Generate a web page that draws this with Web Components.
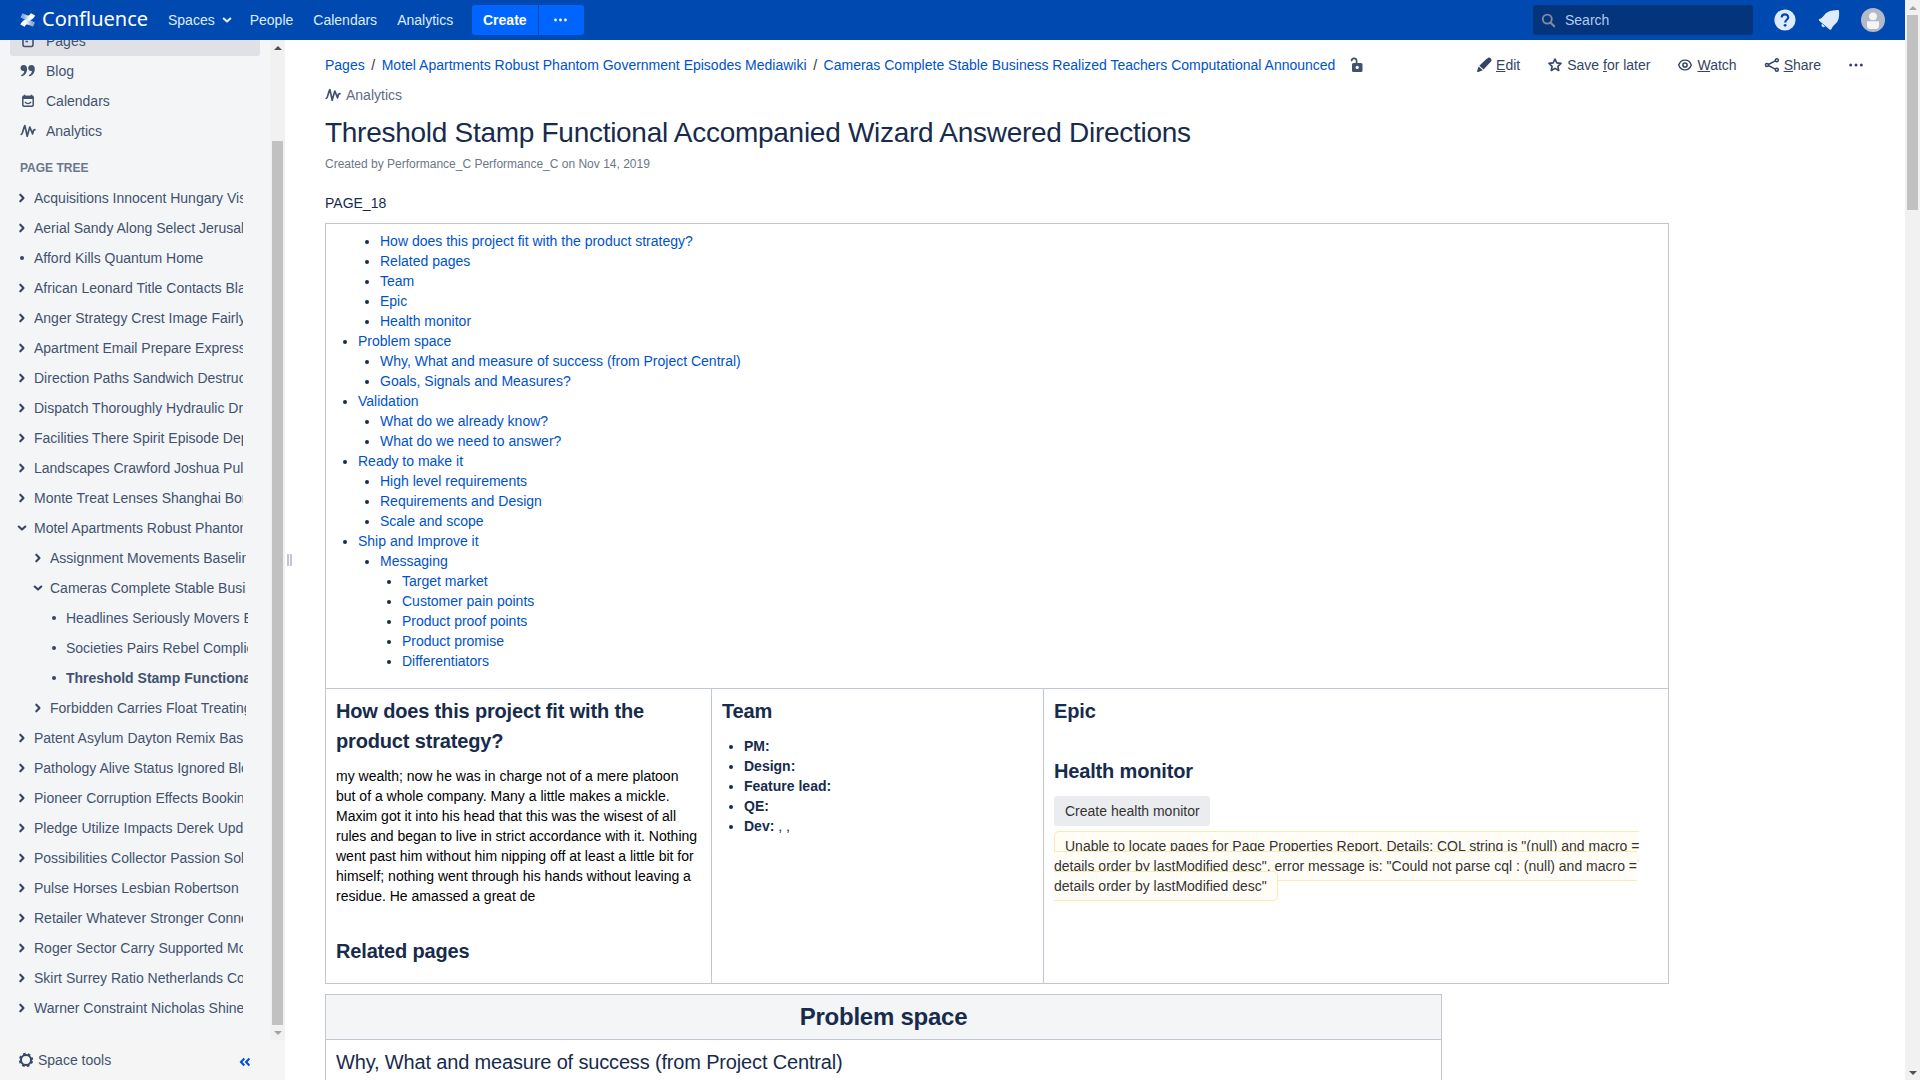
<!DOCTYPE html>
<html lang="en">
<head>
<meta charset="utf-8">
<title>Threshold Stamp Functional Accompanied Wizard Answered Directions - Confluence</title>
<style>
html,body{margin:0;height:100%;overflow:hidden;background:#fff}
body{font:14px/20px "Liberation Sans",Arial,sans-serif;color:#172b4d}
</style>
</head>
<body>
<wiki-app></wiki-app>
<script>
const define = (name, css, html) => customElements.define(name, class extends HTMLElement {
  constructor() {
    super();
    const root = this.attachShadow({ mode: 'open' });
    const t = document.createElement('template');
    t.innerHTML = `<style>*{box-sizing:border-box}a{color:#0052cc;text-decoration:none}${css}</style>${typeof html === 'function' ? html(this) : html}`;
    root.append(t.content.cloneNode(true));
  }
});
/* Elements whose markup depends on attributes render once connected. */
const defineAttr = (name, css, render) => customElements.define(name, class extends HTMLElement {
  connectedCallback() {
    if (this.shadowRoot) return;
    this.attachShadow({ mode: 'open' }).innerHTML = `<style>*{box-sizing:border-box}a{color:#0052cc;text-decoration:none}${css}</style>${render(this)}`;
  }
});

const S = 'fill="none" stroke="currentColor"';
const ICONS = {
  logo: `<defs><linearGradient id="a" x1="1" y1="0" x2=".2" y2="0"><stop offset="0" stop-color="#fff"/><stop offset=".45" stop-color="#fff"/><stop offset="1" stop-color="#fff" stop-opacity=".55"/></linearGradient><linearGradient id="b" x1="0" y1="0" x2=".8" y2="0"><stop offset="0" stop-color="#fff"/><stop offset=".45" stop-color="#fff"/><stop offset="1" stop-color="#fff" stop-opacity=".55"/></linearGradient></defs><path fill="url(#b)" d="M.6 11.9c-.2.3-.1.6.2.8l3.200 1.900c.3.2.6.1.8-.2 1.300-2.100 2.100-2.400 4.200-1.400l3.500 1.600c.3.1.6 0 .7-.3l1.600-3.400c.1-.3 0-.6-.3-.7L11 8.600C6.300 6.400 3.300 7.500.6 11.900z"/><path fill="url(#a)" d="M14.900 4.100c.2-.3.1-.6-.2-.8L11.500 1.400c-.3-.2-.6-.1-.8.2-1.300 2.100-2.100 2.400-4.200 1.400L3 1.400c-.3-.1-.6 0-.7.300L.7 5.100c-.1.300 0 .6.300.7l3.500 1.600c4.700 2.200 7.700 1.100 10.400-3.300z"/>`,
  pages: `<rect x="3" y="2.500" width="10" height="11" rx="1.500" ${S} stroke-width="1.600"/><path d="M5.500 6h5M5.500 8.500h2.500" ${S} stroke-width="1.300"/>`,
  blog: `<path d="M3.800 2C1.900 2 .5 3.300.5 5.100s1.300 3 2.900 3c.3 0 .6 0 .8-.1-.1 1.900-1.100 3.100-2.800 4.100-.6.400-.2 1.500.7 1.200 3.300-1.100 5-3.900 5-7.400C7.100 3.400 5.800 2 3.800 2zM11.500 2C9.600 2 8.200 3.300 8.200 5.100s1.300 3 2.900 3c.3 0 .6 0 .8-.1-.1 1.900-1.100 3.100-2.800 4.100-.6.400-.2 1.500.7 1.200 3.300-1.100 5-3.900 5-7.400C14.800 3.400 13.500 2 11.500 2z" fill="currentColor"/>`,
  calendar: `<rect x="2.800" y="3.500" width="10.400" height="9.700" rx="1.200" ${S} stroke-width="1.500"/><path d="M2.500 2.800h11v3.200h-11z" fill="currentColor"/><path d="M4.500 1.800v2M11.500 1.800v2" ${S} stroke-width="1.600"/><path d="M5 8.800c1.500 2.300 4.500 2.300 6 0" ${S} stroke-width="1.300"/>`,
  analytics: `<path d="M1.200 11.300C2.900 11.500 3.300 4.500 4.900 2.600L7.200 13.200 9.800 4 12.600 10.900 13.500 7.200 14.900 6.600" ${S} stroke-width="1.700" stroke-linejoin="round" stroke-linecap="round"/>`,
  search: `<circle cx="6.700" cy="6.500" r="4.800" ${S} stroke-width="2"/><path d="m10.300 10.300 3.800 3.900" ${S} stroke-width="2.300" stroke-linecap="round"/>`,
  lock: `<rect x="4" y="6" width="10.500" height="9" rx="1.500" fill="currentColor"/><circle cx="9.200" cy="10.400" r="1.600" fill="#fff"/><path d="M3.500 4.200C3.700.8 8.300.4 8.600 3.800V6.500" ${S} stroke-width="1.700"/>`,
  edit: `<path d="M10.100 2.200 12 .9c.7-.5 1.700-.4 2.300.2l.8.900c.6.700.6 1.500.1 2.200l-7.600 8.400-4.300-3.900zM2.600 9.400l4.200 3.900-4.500 1.700c-.8.200-1.400-.400-1.100-1.200z" fill="currentColor"/>`,
  star: `<path d="m8 2 1.800 3.900 4.200.5-3.100 2.900.8 4.200L8 11.400l-3.700 2.100.8-4.200L2 6.400l4.200-.5z" ${S} stroke-width="1.600" stroke-linejoin="round"/>`,
  watch: `<path d="M1.700 8c2.300-6.500 10.300-6.500 12.600 0-2.300 6.500-10.300 6.500-12.600 0z" ${S} stroke-width="1.400"/><circle cx="8" cy="8" r="2.100" ${S} stroke-width="1.500"/>`,
  share: `<path d="M12.300 3.300 3.300 8l9 4.700" ${S} stroke-width="1.500"/><g fill="#fff" stroke="currentColor" stroke-width="1.500"><circle cx="12.800" cy="3.300" r="1.500"/><circle cx="2.900" cy="8" r="1.500"/><circle cx="12.800" cy="12.700" r="1.500"/></g>`,
  more: `<g fill="currentColor"><circle cx="2.700" cy="8" r="1.500"/><circle cx="8" cy="8" r="1.500"/><circle cx="13.300" cy="8" r="1.500"/></g>`,
  right: `<path d="m6.300 4.700 3.200 3.300-3.200 3.300" ${S} stroke-width="2.100" stroke-linecap="round" stroke-linejoin="round"/>`,
  down: `<path d="m4.700 6.500 3.300 3.100 3.300-3.100" ${S} stroke-width="2.100" stroke-linecap="round" stroke-linejoin="round"/>`,
  dot: `<circle cx="8" cy="8" r="2" fill="currentColor"/>`,
  gear: `<circle cx="8" cy="8" r="5" ${S} stroke-width="2"/><circle cx="8" cy="8" r="6.300" ${S} stroke-width="1.700" stroke-dasharray="2.700 2.248" stroke-dashoffset="-1.100"/>`,
  collapse: `<path d="M7.300 4.600 4 8l3.300 3.400M12.400 4.600 9.100 8l3.300 3.400" ${S} stroke-width="2.100"/>`,
  help: `<circle cx="12" cy="12" r="10.600" fill="#deebff"/><path d="M8.700 9.600C8.700 5.200 15.300 5.400 15.200 9.400c-.1 2.300-3 2.400-3 5" ${S} stroke-width="2.200"/><circle cx="12.100" cy="17.300" r="1.400" fill="currentColor"/>`,
  bell: `<path d="M2.200 12.800c-.7-.6-.5-1.400.2-1.700 2-.8 3.500-2.200 5-4.100C10 3.600 14 2.400 20.600 2c.9 0 1.500.5 1.500 1.400.2 6.200-.5 9.800-3.900 12.700-1.900 1.600-3 3.100-3.700 5-.3.800-1.200 1-1.900.400z" fill="#deebff"/><path d="M5.100 15.700c-1.700 1.900.9 4.600 2.900 2.900z" fill="#deebff"/>`,
  avatar: `<circle cx="12" cy="12" r="12" fill="#b3b9c6"/><circle cx="12" cy="8.300" r="3.900" fill="#f4f5f7"/><path d="M6 13.300h12v4.400c0 2-1.200 3.300-3.200 3.300H9.200C7.200 21 6 19.700 6 17.700z" fill="#f4f5f7"/>`
};
defineAttr('wiki-icon', `:host{display:block;flex:none;width:16px;height:16px}svg{display:block;width:100%;height:100%}`,
  el => `<svg viewBox="0 0 ${el.getAttribute('box') || 16} ${el.getAttribute('box') || 16}">${ICONS[el.getAttribute('name')]}</svg>`);

/* Scrollbar track with arrows; thumb offset and length come from custom properties. */
define('scroll-track', `:host{display:flex;flex-direction:column;flex:none;width:15px;background:#f1f1f1;padding:0 2px}
.a{height:15px;display:flex;align-items:center;justify-content:center}
.a::before{content:"";border:4px solid transparent}
.up::before{border-top:0;border-bottom-color:var(--up,#505050)}
.dn::before{border-bottom:0;border-top-color:var(--down,#505050)}
.t{flex:1;padding-top:var(--start,0)}.t i{display:block;height:var(--len);background:#c1c1c1}`,
`<div class="a up"></div><div class="t"><i></i></div><div class="a dn"></div>`);

define('top-bar', `:host{display:flex;height:40px;background:#0049b0;color:#deebff;align-items:center}
.logo{display:flex;align-items:center;width:148px;padding-left:20px;gap:6px;color:#fff;font:20px/40px "Noto Sans",sans-serif}
.logo wiki-icon{width:16px;height:16px}.logo span{position:relative;top:-1px}
nav{display:flex;padding-left:20px;width:324px}
nav span{display:flex;align-items:center;margin-right:20px}nav wiki-icon{margin:0 -5px 0 4px}
.b{height:30px;background:#0065ff;color:#fff;font-weight:bold;line-height:30px;border-radius:3px 0 0 3px;padding:0 11px;width:66px}
.m{width:45px;margin-left:1px;border-radius:0 3px 3px 0;display:flex;align-items:center;padding:0 0 0 14px}.m wiki-icon{width:15px}
.s{margin-left:auto;width:220px;height:30px;border-radius:3px;background:#03347c;display:flex;align-items:center;padding-left:8px;gap:9px;color:#b3cbee}
.s wiki-icon{color:#7f8a9b;width:15px;height:15px}
.r{display:flex;gap:20px;padding:0 20px 0 20px;color:#0049b0}.r wiki-icon{width:24px;height:24px}`,
`<div class="logo"><wiki-icon name="logo"></wiki-icon><span>Confluence</span></div>
<nav><span>Spaces<wiki-icon name="down"></wiki-icon></span><span>People</span><span>Calendars</span><span>Analytics</span></nav>
<div class="b">Create</div><div class="b m"><wiki-icon name="more"></wiki-icon></div>
<div class="s"><wiki-icon name="search"></wiki-icon>Search</div>
<div class="r"><wiki-icon name="help" box="24"></wiki-icon><wiki-icon name="bell" box="24"></wiki-icon><wiki-icon name="avatar" box="24"></wiki-icon></div>`);

defineAttr('side-link', `:host{display:flex;flex:none;height:30px;align-items:center;gap:10px;padding-left:10px;margin:0 10px;border-radius:3px}:host([current]){background:#dfe1e6}`,
  el => `<wiki-icon name="${el.getAttribute('icon')}"></wiki-icon><slot></slot>`);

defineAttr('tree-item', `:host{display:flex;flex:none;height:30px;align-items:center}:host([current]){font-weight:bold}
wiki-icon{margin-right:4px;color:#344563}span{overflow:hidden;white-space:nowrap;line-height:20px}`,
  el => { const l = +el.getAttribute('level') || 0;
    return `<wiki-icon name="${el.getAttribute('state') || 'right'}" style="margin-left:${14 + 16 * l}px"></wiki-icon><span style="width:${[209, 196, 182][l]}px"><slot></slot></span>`; });

const TREE = [
  ['Acquisitions Innocent Hungary Visit'], ['Aerial Sandy Along Select Jerusalem'], ['Afford Kills Quantum Home', 0, 'dot'],
  ['African Leonard Title Contacts Black'], ['Anger Strategy Crest Image Fairly'], ['Apartment Email Prepare Express'],
  ['Direction Paths Sandwich Destruction'], ['Dispatch Thoroughly Hydraulic Draw'], ['Facilities There Spirit Episode Depth'],
  ['Landscapes Crawford Joshua Pull'], ['Monte Treat Lenses Shanghai Born'], ['Motel Apartments Robust Phantom', 0, 'down'],
  ['Assignment Movements Baseline', 1], ['Cameras Complete Stable Business', 1, 'down'], ['Headlines Seriously Movers Ended', 2, 'dot'],
  ['Societies Pairs Rebel Complicated', 2, 'dot'], ['Threshold Stamp Functional', 2, 'dot', 'current'], ['Forbidden Carries Float Treating', 1],
  ['Patent Asylum Dayton Remix Bass'], ['Pathology Alive Status Ignored Blocks'], ['Pioneer Corruption Effects Booking'],
  ['Pledge Utilize Impacts Derek Update'], ['Possibilities Collector Passion Solo'], ['Pulse Horses Lesbian Robertson'],
  ['Retailer Whatever Stronger Connect'], ['Roger Sector Carry Supported Mount'], ['Skirt Surrey Ratio Netherlands Cool'], ['Warner Constraint Nicholas Shine']
];
define('side-bar', `:host{display:flex;flex-direction:column;width:285px;flex:none;background:#f4f5f7;color:#42526e}
.v{display:flex;height:1000px;overflow:hidden}.l{flex:1;display:flex;flex-direction:column;overflow:hidden;justify-content:flex-end;padding-bottom:17px}
.h{flex:none;font:bold 12px/30px "Liberation Sans",sans-serif;color:#6b778c;padding:7px 0 0 20px;height:37px}
scroll-track{--start:86px;--len:884px;--down:#a3a3a3}
.f{height:40px;display:flex;align-items:center;background:#f5f5f5;padding:0 32px 0 18px;gap:4px}
.f wiki-icon{color:#344563}.f wiki-icon:last-child{color:#0052cc;margin-left:auto;margin-top:4px}`,
`<div class="v"><div class="l"><side-link icon="pages" current>Pages</side-link><side-link icon="blog">Blog</side-link><side-link icon="calendar">Calendars</side-link><side-link icon="analytics">Analytics</side-link>
<div class="h">PAGE TREE</div>
${TREE.map(([t, l = 0, s = 'right', c = '']) => `<tree-item level="${l}" state="${s}" ${c}>${t}</tree-item>`).join('')}</div><scroll-track></scroll-track></div>
<div class="f"><wiki-icon name="gear"></wiki-icon>Space tools<wiki-icon name="collapse"></wiki-icon></div>`);

define('page-head', `:host{display:block}.row{display:flex;height:20px;align-items:center}
.row i{font-style:normal;color:#333;width:17px;text-align:center}.lock{color:#42526e;margin-left:13px}
.act{display:flex;margin-left:auto;color:#344563}.act span{display:flex;align-items:center;gap:4px}
.act span+span{margin-left:27px}.act p{margin:0}
.an{margin-top:10px;gap:5px;color:#5e6c84}.an wiki-icon{color:#42526e}
h1{font-size:28px;font-weight:normal;line-height:34px;letter-spacing:-.01em;margin:11px 0 0}
.by{font-size:12px;color:#6b778c;margin-top:4px}`,
`<div class="row"><a>Pages</a><i>/</i><a>Motel Apartments Robust Phantom Government Episodes Mediawiki</a><i>/</i><a>Cameras Complete Stable Business Realized Teachers Computational Announced</a><wiki-icon class="lock" name="lock"></wiki-icon>
<div class="act"><span><wiki-icon name="edit"></wiki-icon><p><u>E</u>dit</p></span><span><wiki-icon name="star"></wiki-icon><p>Save <u>f</u>or later</p></span><span><wiki-icon name="watch"></wiki-icon><p><u>W</u>atch</p></span><span><wiki-icon name="share"></wiki-icon><p><u>S</u>hare</p></span><span><wiki-icon name="more"></wiki-icon></span></div></div>
<div class="row an"><wiki-icon name="analytics"></wiki-icon>Analytics</div>
<h1>Threshold Stamp Functional Accompanied Wizard Answered Directions</h1>
<div class="by">Created by Performance_C Performance_C on Nov 14, 2019</div>`);

const toc = (items) => `<ul>${items.map(i => Array.isArray(i) ? `<li>${i[0] ? `<a>${i[0]}</a>` : ''}${toc(i[1])}</li>` : `<li><a>${i}</a></li>`).join('')}</ul>`;
define('page-toc', `:host{display:block}ul{margin:0;padding-left:22px;list-style:disc}ul ul{list-style:disc}.first{padding-left:22px}`,
`<div class="first">${toc(['How does this project fit with the product strategy?', 'Related pages', 'Team', 'Epic', 'Health monitor'])}</div>` +
toc([['Problem space', ['Why, What and measure of success (from Project Central)', 'Goals, Signals and Measures?']],
  ['Validation', ['What do we already know?', 'What do we need to answer?']],
  ['Ready to make it', ['High level requirements', 'Requirements and Design', 'Scale and scope']],
  ['Ship and Improve it', [['Messaging', ['Target market', 'Customer pain points', 'Product proof points', 'Product promise', 'Differentiators']]]]]));

define('error-note', `:host{display:block}span{background:#fffdf6;border:1px solid #ffeaae;border-radius:5px;padding:6px 10px;color:#333}`,
`<span><slot></slot></span>`);

define('page-body', `:host{display:block}.p{margin:19px 0 10px}
.t{border:1px solid #c1c7d0}.c{padding:7px 10px}
.top{width:1344px}.toc{height:465px;border-bottom:1px solid #c1c7d0}
.cols{display:flex;height:294px}
.cols .c{border-right:1px solid #c1c7d0}.c1{width:386px}.c2{width:332px}.cols .c3{flex:1;border:0}
h2{font-size:20px;line-height:30px;letter-spacing:-.008em;margin:0}p{margin:10px 0 0;color:#000}.rel{margin-top:30px}
ul{margin:10px 0 0;padding-left:22px}
.btn{display:block;width:156px;height:30px;margin:10px 0;border-radius:3px;background:#ebecf0;color:#333;line-height:30px;padding-left:11px}
.two{width:1117px;margin-top:10px;height:200px}.hd{background:#f4f5f7;height:45px;border-bottom:1px solid #c1c7d0;text-align:center;font:bold 24px/30px "Liberation Sans",sans-serif;letter-spacing:-.01em}
.sub{font-size:20px;line-height:30px;letter-spacing:-.008em}`,
`<div class="p">PAGE_18</div>
<div class="t top"><div class="c toc"><page-toc></page-toc></div>
<div class="cols"><div class="c c1"><h2>How does this project fit with the product strategy?</h2><p>my wealth; now he was in charge not of a mere platoon but of a whole company. Many a little makes a mickle. Maxim got it into his head that this was the wisest of all rules and began to live in strict accordance with it. Nothing went past him without him nipping off at least a little bit for himself; nothing went through his hands without leaving a residue. He amassed a great de</p><h2 class="rel">Related pages</h2></div>
<div class="c c2"><h2>Team</h2><ul><li><b>PM:</b></li><li><b>Design:</b></li><li><b>Feature lead:</b></li><li><b>QE:</b></li><li><b>Dev:</b> , ,</li></ul></div>
<div class="c c3"><h2>Epic</h2><h2 class="rel">Health monitor</h2><div class="btn">Create health monitor</div><error-note>Unable to locate pages for Page Properties Report. Details: CQL string is "(null) and macro = details order by lastModified desc", error message is: "Could not parse cql : (null) and macro = details order by lastModified desc"</error-note></div></div></div>
<div class="t two"><div class="c hd">Problem space</div><div class="c sub">Why, What and measure of success (from Project Central)</div></div>`);

define('wiki-app', `:host{display:flex;width:1920px;height:1080px;overflow:hidden}
.app{flex:1;display:flex;flex-direction:column;min-width:0}.w{display:flex;height:1040px}
.g{width:40px;flex:none;display:flex;align-items:center;padding:0 0 0 2px;gap:1px}.g i{width:2px;height:12px;background:#c1c7d0}
main{flex:1;overflow:hidden;padding:15px 41px 0 0;min-width:0}
scroll-track{--len:195px;--up:#a3a3a3}`,
`<div class="app"><top-bar></top-bar><div class="w"><side-bar></side-bar><div class="g"><i></i><i></i></div><main><page-head></page-head><page-body></page-body></main></div></div><scroll-track></scroll-track>`);
</script>
</body>
</html>
